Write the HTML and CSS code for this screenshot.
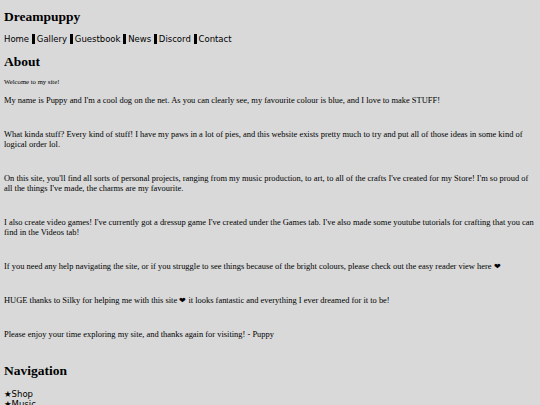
FILE: index.html
```html
<!DOCTYPE html>
<html>
<head>
<meta charset="utf-8">
<title>Dreampuppy</title>
<link rel="stylesheet" href="styles.css">
</head>
<body>
<h2 class="site-title">Dreampuppy</h2>
<nav class="topnav">
  <a href="#">Home</a> <span class="sep"></span><a href="#">Gallery</a> <span class="sep"></span><a href="#">Guestbook</a> <span class="sep"></span><a href="#">News</a> <span class="sep"></span><a href="#">Discord</a> <span class="sep"></span><a href="#">Contact</a>
</nav>
<h2 class="section-title">About</h2>
<p class="welcome">Welcome to my site!</p>
<p class="para">My name is Puppy and I'm a cool dog on the net. As you can clearly see, my favourite colour is blue, and I love to make STUFF!</p>
<p class="para">What kinda stuff? Every kind of stuff! I have my paws in a lot of pies, and this website exists pretty much to try and put all of those ideas in some kind of logical order lol.</p>
<p class="para">On this site, you'll find all sorts of personal projects, ranging from my music production, to art, to all of the crafts I've created for my Store! I'm so proud of all the things I've made, the charms are my favourite.</p>
<p class="para">I also create video games! I've currently got a dressup game I've created under the Games tab. I've also made some youtube tutorials for crafting that you can find in the Videos tab!</p>
<p class="para">If you need any help navigating the site, or if you struggle to see things because of the bright colours, please check out the easy reader view here ❤</p>
<p class="para">HUGE thanks to Silky for helping me with this site ❤ it looks fantastic and everything I ever dreamed for it to be!</p>
<p class="para">Please enjoy your time exploring my site, and thanks again for visiting! - Puppy</p>
<h2 class="section-title nav-title">Navigation</h2>
<ul class="sitenav">
  <li><a href="#">★Shop</a></li>
  <li><a href="#">★Music</a></li>
  <li><a href="#">★Art</a></li>
  <li><a href="#">★Games</a></li>
  <li><a href="#">★Videos</a></li>
</ul>
</body>
</html>
```
FILE: styles.css
```css
html {
  background: #d9d9d9;
}
body {
  margin: 0;
  padding: 4px 4px 0 4px;
  background: #d9d9d9;
  color: #000;
  font-family: "Liberation Serif", "Times New Roman", serif;
  font-size: 8.45px;
  line-height: 10px;
}
.site-title {
  font-size: 13.5px;
  font-weight: bold;
  line-height: 16px;
  margin: 5px 0 0 0;
}
.topnav {
  font-family: "DejaVu Sans", Verdana, sans-serif;
  font-size: 8.5px;
  line-height: 12px;
  margin: 8px 0 0 0;
}
.topnav a {
  color: #000;
  text-decoration: none;
}
.sep {
  display: inline-block;
  width: 3px;
  height: 10px;
  margin-right: 2px;
  background: #000;
  vertical-align: -2px;
}
.section-title {
  font-size: 13.5px;
  font-weight: bold;
  line-height: 16px;
  margin: 9px 0 0 0;
}
.welcome {
  font-size: 6.7px;
  line-height: 8px;
  margin: 8px 0 0 0;
}
.para {
  margin: 9px 0 24px 0;
}
.para + .para {
  margin-top: 0;
}
.nav-title {
  margin-top: 20px;
}
.sitenav {
  list-style: none;
  margin: 10px 0 0 0;
  padding: 0;
  font-family: "DejaVu Sans", Verdana, sans-serif;
  font-size: 8.5px;
  line-height: 10px;
}
.sitenav a {
  color: #000;
  text-decoration: none;
}
```
